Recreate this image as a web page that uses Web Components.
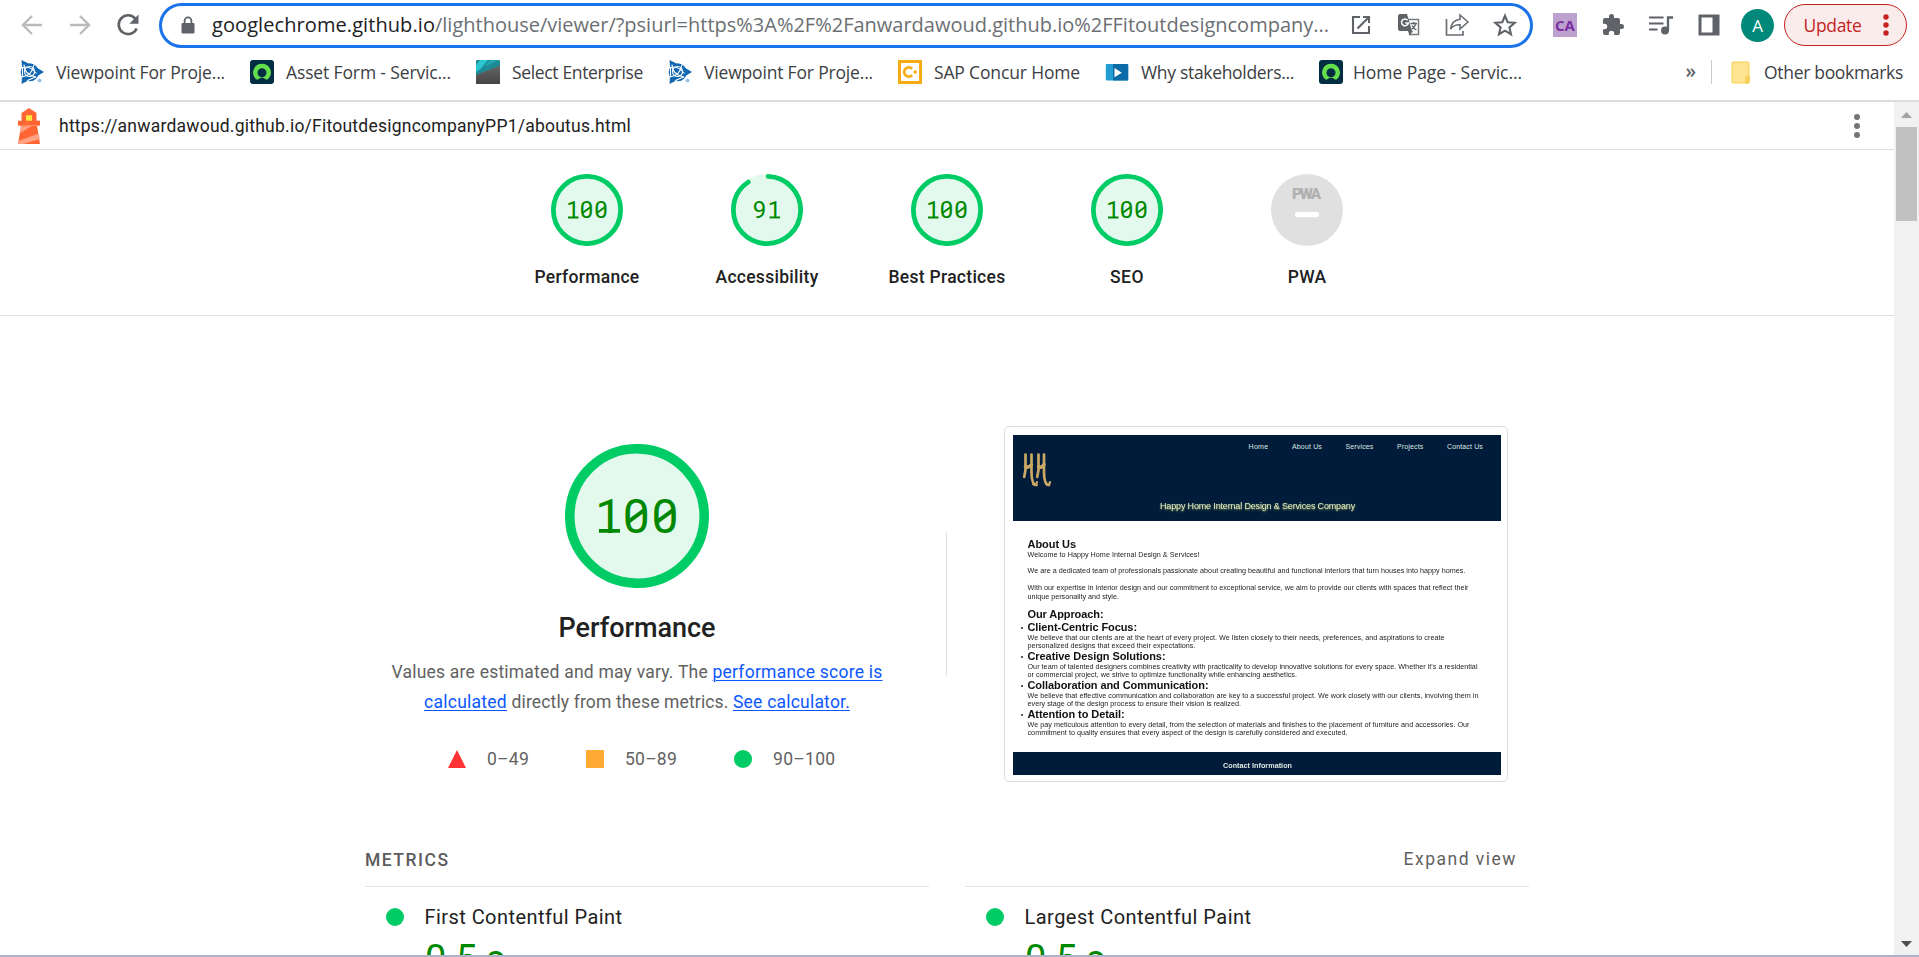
<!DOCTYPE html>
<html lang="en">
<head>
<meta charset="utf-8">
<title>Lighthouse Report Viewer</title>
<style>
html,body{margin:0;padding:0;height:957px;overflow:hidden;background:#fff}
body{font-family:Roboto,"Liberation Sans",sans-serif;color:#212121}
</style>
</head>
<body>
<app-window></app-window>
<script>
function define(name, html, init){
  const t=document.createElement('template');t.innerHTML=html;
  customElements.define(name,class extends HTMLElement{
    connectedCallback(){
      if(this.shadowRoot)return;
      this.attachShadow({mode:'open'}).appendChild(t.content.cloneNode(true));
      if(init)init.call(this,this.shadowRoot);
    }
  });
}

/* Text run that spreads its letters over a given width */
define('fit-text',`<style>:host{display:inline-block;white-space:pre;flex:none}</style><slot></slot>`,function(){
  const w=+this.getAttribute('w');
  const nat=this.getBoundingClientRect().width;
  const n=this.textContent.length;
  this.style.letterSpacing=((w-nat)/n).toFixed(4)+'px';
  this.style.width=w+'px';
});

const ICONS={
 back:[24,'<path d="M22 12H3.500M12 3 3 12l9 9" fill="none" stroke="#bababa" stroke-width="2.300"/>'],
 forward:[24,'<path d="M2 12h18.500M12 3l9 9-9 9" fill="none" stroke="#bababa" stroke-width="2.300"/>'],
 reload:[24,'<path d="M20.700 15.500A9.400 9.400 0 1 1 19.600 6" fill="none" stroke="#5f6368" stroke-width="2.600"/><path d="M22.500 1.500v9.200h-9.200z" fill="#5f6368"/>'],
 lock:[18,'<path d="M3 7.500h12v9.500h-12z" fill="#5f6368" stroke="#5f6368" stroke-width="1" stroke-linejoin="round"/><path d="M5.600 7.500V4.800a3.400 3.400 0 0 1 6.800 0v2.700" fill="none" stroke="#5f6368" stroke-width="1.800"/>'],
 open:[24,'<path d="M11 4H4v16h16v-7M14 4h6v6M20 4 8.500 15.500" fill="none" stroke="#5f6368" stroke-width="2.100"/>'],
 translate:[24,'<path d="M11 6.500h10.500v15H12" fill="#fff" stroke="#757a7f" stroke-width="1.500"/><path d="M1 3q0-2 2-2h7l5 17H3q-2 0-2-2z" fill="#5f6368"/><path d="M10.600 7.200A3.400 3.400 0 1 0 11.300 10H8.200" fill="none" stroke="#fff" stroke-width="1.500"/><path d="M13.500 10.500h6.500M16.700 9v1.500M19 10.500c-.8 2.800-2.300 4.500-4.300 6M15 12.500c1 2 2.500 3.500 4.500 4.500" fill="none" stroke="#5f6368" stroke-width="1.300"/><path d="m11 18 1.500 4.500L16 18z" fill="#5f6368"/>'],
 share:[24,'<path d="M1.500 6v16h16.500v-4" fill="none" stroke="#6b6f74" stroke-width="1.700"/><path d="M15 2l8 7-8 7v-4.300c-4.500-.2-7.500 1.300-9.500 4.300.8-5.500 4-9 9.500-9.700z" fill="none" stroke="#6b6f74" stroke-width="1.600"/>'],
 star:[24,'<path d="m12 2.800 2.700 6.400 7 .6-5.300 4.600 1.600 6.800-6-3.600-6 3.600 1.600-6.800L2.300 9.800l7-.6z" fill="none" stroke="#5f6368" stroke-width="2.100"/>'],
 puzzle:[24,'<path d="M20.500 11H19V7a2 2 0 0 0-2-2h-4V3.500a2.500 2.500 0 0 0-5 0V5H4a2 2 0 0 0-2 2v3.800h1.500a2.700 2.700 0 0 1 0 5.400H2V20a2 2 0 0 0 2 2h3.800v-1.500a2.700 2.700 0 0 1 5.400 0V22H17a2 2 0 0 0 2-2v-4h1.500a2.500 2.500 0 0 0 0-5z" fill="#5f6368"/>'],
 music:[24,'<path d="M0 4.500h14.500M0 10.500h14.500M0 16.500h8.500" fill="none" stroke="#5f6368" stroke-width="2.200"/><circle cx="16" cy="17.500" r="4" fill="#5f6368"/><path d="M19 17.500v-13h5" fill="none" stroke="#5f6368" stroke-width="2.300"/>'],
 panel:[24,'<path d="M1.500 1.500h21v21h-21z" fill="#5f6368"/><path d="M4.500 4.500h11v15h-11z" fill="#fff"/>'],
 trimble:[24,'<g fill="#1268b0"><circle cx="9.700" cy="12.300" r="9"/><path d="M1.500 0l7 3.500-6.500 4zM1.500 24l7-3.500-6.500-4.500zM16.500 7.500l7.500 4.500-7.500 4.500z"/></g><g fill="none" stroke="#fff" stroke-width="1.100"><path d="M1.500 8.500q7-4.500 15 5M4 4.500q0 10 12 12.500M2 17q10-1 12-12.500"/><circle cx="9.500" cy="11.500" r="5"/><path d="M2.500 7v10M7 20.800l9-4"/></g><circle cx="19.500" cy="20.500" r="1.600" fill="#a8c9e4" stroke="#6fa6d2" stroke-width=".6"/>'],
 servicenow:[24,'<rect width="24" height="24" rx="3" fill="#032d42"/><path d="M12 3.800A8.800 8.800 0 0 0 5.900 19c.7.700 1.700.700 2.500.2a6 6 0 0 1 7.200 0c.8.500 1.800.500 2.500-.2A8.800 8.800 0 0 0 12 3.800zm0 13.400a4.500 4.500 0 1 1 0-9 4.500 4.500 0 0 1 0 9z" fill="#63df4e"/>'],
 enterprise:[24,'<defs><linearGradient id="g" x2="0" y2="1"><stop stop-color="#707070"/><stop offset="1" stop-color="#454545"/></linearGradient></defs><path d="M0 2q0-2 2-2h20q2 0 2 2v22H0z" fill="url(#g)"/><path d="M0 2q0-2 2-2h20q2 0 2 2v3.500L0 15z" fill="#1d8a96"/><path d="M4 0h8L5 8.500 0 12V5z" fill="#2bc5d2"/><path d="M14 0h9L8 7z" fill="#23a5b0"/>'],
 concur:[24,'<path d="M1.500 1.500h21v21h-21z" fill="#fff" stroke="#f5ab12" stroke-width="3"/><path d="M14.200 8.700A4.700 4.700 0 1 0 14.200 15.300" fill="none" stroke="#f5ab12" stroke-width="2.700"/><circle cx="17.200" cy="12" r="1.800" fill="#f5ab12"/>'],
 video:[24,'<rect x=".8" y="4" width="22.400" height="16.400" rx="1" fill="#249dd4"/><path d="M8 4h14.200q1 0 1 1v14.400q0 1-1 1H8z" fill="#0c6ca8"/><path d="M9.500 8v9.300l7.300-4.600z" fill="#fff"/>'],
 folder:[24,'<path d="M3 2h15q1 0 1 1v19q0 1-1 1H3q-1 0-1-1V3q0-1 1-1z" fill="#ffe591" stroke="#f5cf4f" stroke-width="1"/><path d="M16 23v-5.500q0-1.500 1.500-1.500t1.500 1.500V22q0 1-1 1z" fill="#fbd863" stroke="#eebf34" stroke-width=".8"/>'],
 lighthouse:[36,'<path d="M18 0 25.500 5v8H10.500V5z" fill="#ff6633"/><path d="M7 12.700h22v5H7z" fill="#ff6633"/><path d="M10 17.700h16L29 36H7z" fill="#ff6633"/><path d="M15 7.200h6v5.500h-6z" fill="#ffeb3b"/><path d="M9.900 18.500 21 17.700 8.600 25.500z" fill="#ffa385"/><path d="M7.600 33 27.900 25.500l.8 5.500L12 36H7z" fill="#ffa385"/>'],
 kebab:[24,'<g fill="#757575"><circle cx="12" cy="3" r="3"/><circle cx="12" cy="12" r="3"/><circle cx="12" cy="21" r="3"/></g>']
};
define('ui-icon',`<style>:host{display:block;flex:none;line-height:0}svg{display:block;overflow:visible}</style><span></span>`,function(r){
  const [v,p]=ICONS[this.getAttribute('name')];
  const s=this.getAttribute('size')||24;
  r.querySelector('span').innerHTML=`<svg width="${s}" height="${s}" viewBox="0 0 ${v} ${v}">${p}</svg>`;
});

define('address-bar',`<style>
:host{box-sizing:border-box;display:flex;align-items:center;width:1374px;height:45px;border:3px solid #1a73e8;border-radius:23px;background:#fff;padding-left:17px;flex:none}
.u{margin-left:15px;font:20px/38px "Open Sans","Noto Sans",sans-serif;color:#202124;width:1117px;display:flex}
.u .p{color:#6b6f73}
.i{display:flex;margin-left:20px;gap:24px;align-items:center}
</style>
<ui-icon name="lock" size="18"></ui-icon>
<div class="u"><fit-text w="223">googlechrome.github.io</fit-text><fit-text class="p" w="894">/lighthouse/viewer/?psiurl=https%3A%2F%2Fanwardawoud.github.io%2FFitoutdesigncompany...</fit-text></div>
<div class="i"><ui-icon name="open"></ui-icon><ui-icon name="translate"></ui-icon><ui-icon name="share"></ui-icon><ui-icon name="star"></ui-icon></div>`);

define('update-chip',`<style>:host{box-sizing:border-box;display:flex;align-items:center;justify-content:space-between;width:123px;height:42px;border:1.500px solid #c5221f;border-radius:21px;background:#faeceb;color:#c5221f;padding:0 17px 0 18.500px;font:17.500px/40px "Open Sans","Noto Sans",sans-serif}
svg{display:block}</style><fit-text w="58">Update</fit-text><svg width="6" height="24" fill="#c5221f"><circle cx="3" cy="4" r="2.700"/><circle cx="3" cy="12" r="2.700"/><circle cx="3" cy="20" r="2.700"/></svg>`);

define('browser-toolbar',`<style>
:host{display:flex;height:50px;align-items:center;padding:0 12px 0 20px;box-sizing:border-box}
.n{display:flex;gap:24px;width:139px}
.x{display:flex;align-items:center;gap:24px;margin-left:20px;flex:1}
.ca{width:24px;height:24px;background:#bda2cf;color:#7b2fa0;font:bold 15px/25px "Open Sans",sans-serif;text-align:center}
.av{width:33px;height:33px;border-radius:50%;background:#00897b;color:#fff;font:17px/33px "Open Sans",sans-serif;text-align:center;margin-left:-4px}
update-chip{margin-left:-14px}
</style>
<div class="n"><ui-icon name="back"></ui-icon><ui-icon name="forward"></ui-icon><ui-icon name="reload"></ui-icon></div>
<address-bar></address-bar>
<div class="x"><div class="ca">CA</div><ui-icon name="puzzle"></ui-icon><ui-icon name="music"></ui-icon><ui-icon name="panel"></ui-icon><div class="av">A</div><update-chip></update-chip></div>`);

define('bookmark-item',`<style>:host{display:flex;align-items:center;gap:12px;flex:none;font:17.500px/24px "Open Sans","Noto Sans",sans-serif;color:#3c4043}</style><slot></slot>`,function(r){
  const n=document.createElement('ui-icon');n.setAttribute('name',this.getAttribute('icon'));r.insertBefore(n,r.querySelector('slot'));
});
define('bookmarks-bar',`<style>
:host{box-sizing:border-box;display:flex;align-items:center;height:52px;padding:0 16px 6px 20px;border-bottom:2px solid #dadcdf}
.l{display:flex;gap:25px;flex:1}
.m{font:600 19px/20px "Open Sans",sans-serif;color:#5f6368;margin-right:15px;padding-bottom:3px}
.s{width:1px;height:24px;background:#c8cacd;margin-right:18px}
bookmark-item:last-child{gap:10px}
</style>
<div class="l">
<bookmark-item icon="trimble"><fit-text w="169">Viewpoint For Proje...</fit-text></bookmark-item>
<bookmark-item icon="servicenow"><fit-text w="165">Asset Form - Servic...</fit-text></bookmark-item>
<bookmark-item icon="enterprise"><fit-text w="131">Select Enterprise</fit-text></bookmark-item>
<bookmark-item icon="trimble"><fit-text w="169">Viewpoint For Proje...</fit-text></bookmark-item>
<bookmark-item icon="concur"><fit-text w="146">SAP Concur Home</fit-text></bookmark-item>
<bookmark-item icon="video"><fit-text w="153">Why stakeholders...</fit-text></bookmark-item>
<bookmark-item icon="servicenow"><fit-text w="169">Home Page - Servic...</fit-text></bookmark-item>
</div><div class="m">»</div><div class="s"></div>
<bookmark-item icon="folder"><fit-text w="139">Other bookmarks</fit-text></bookmark-item>`);

define('viewer-header',`<style>:host{box-sizing:border-box;display:flex;align-items:center;height:48px;border-bottom:1px solid #dedede;padding:0 25px 0 11px;color:#212121;font:17.500px/46px Roboto,sans-serif}
.u{margin-left:12px;flex:1}</style>
<ui-icon name="lighthouse" size="36"></ui-icon><div class="u"><fit-text w="572">https://anwardawoud.github.io/FitoutdesigncompanyPP1/aboutus.html</fit-text></div><ui-icon name="kebab"></ui-icon>`);

/* Score ring; digits sit in monospace cells, with a slashed zero and a footed one */
define('score-dial',`<style>:host{display:block}
svg{display:block}
text{font-family:Roboto,sans-serif;font-size:40px;font-weight:400;fill:#080}</style><svg viewBox="0 0 120 120"><circle cx="60" cy="60" r="60" fill="#e4f9ee"/><circle class="a" cx="60" cy="60" r="56" fill="none" stroke="#0c6" stroke-width="8" stroke-linecap="round" transform="rotate(-88 60 60)"/><text y="74"></text><path class="m" fill="none" stroke="#080" stroke-width="3.200"/></svg>`,function(r){
  const s=+this.getAttribute('size'),v=this.getAttribute('score');
  const svg=r.querySelector('svg');svg.setAttribute('width',s);svg.setAttribute('height',s);
  this.style.width=s+'px';
  if(v<100)r.querySelector('.a').setAttribute('stroke-dasharray',(v/100*351.86-4)+' 351.86');
  const t=r.querySelector('text');t.textContent=v;
  const x0=59.300-v.length*12;let xs=[],d='';
  [...v].forEach((c,i)=>{const x=x0+i*24;
    xs.push(x+(c==='1'?2:.8));
    if(c==='1')d+=`M${x+5} 72.400h17.500`;
    if(c==='0')d+=`M${x+4.500} 65.500l15-11`;
  });
  t.setAttribute('x',xs.join(' '));
  r.querySelector('.m').setAttribute('d',d);
});
define('pwa-badge',`<style>:host{display:block}svg{display:block}</style><svg width="72" height="72"><circle cx="36" cy="36" r="36" fill="#e0e0e0"/><text x="21" y="25" font-family="Roboto,sans-serif" font-weight="900" font-size="15.200" textLength="29" fill="#b0b0b0">PWA</text><rect x="24" y="38" width="24" height="5.200" rx="2.600" fill="#fff"/></svg>`);
define('category-score',`<style>:host{display:flex;flex-direction:column;align-items:center;width:180px;font:500 17.500px/24px Roboto,sans-serif;color:#212121}.l{margin-top:19px}</style><slot name="dial"></slot><div class="l"><slot></slot></div>`);
define('score-row',`<style>:host{box-sizing:border-box;display:flex;justify-content:center;height:166px;padding-top:24px;border-bottom:1px solid #e0e0e0}</style>
<category-score><score-dial slot="dial" size="72" score="100"></score-dial><fit-text w="105">Performance</fit-text></category-score>
<category-score><score-dial slot="dial" size="72" score="91"></score-dial><fit-text w="103">Accessibility</fit-text></category-score>
<category-score><score-dial slot="dial" size="72" score="100"></score-dial><fit-text w="117">Best Practices</fit-text></category-score>
<category-score><score-dial slot="dial" size="72" score="100"></score-dial><fit-text w="34">SEO</fit-text></category-score>
<category-score><pwa-badge slot="dial"></pwa-badge><fit-text w="38.500">PWA</fit-text></category-score>`);

define('score-legend',`<style>:host{display:flex;font:17.500px/24px Roboto,sans-serif;color:#616161}
div{display:flex;align-items:center}svg{margin-right:21px}.b{margin-left:57px}</style>
<div><svg width="18" height="18"><path d="M9 0l9 18H0z" fill="#f33"/></svg><fit-text w="42">0–49</fit-text></div>
<div class="b"><svg width="18" height="18"><path d="M0 0h18v18H0z" fill="#fa3"/></svg><fit-text w="52">50–89</fit-text></div>
<div class="b"><svg width="18" height="18"><circle cx="9" cy="9" r="9" fill="#0c6"/></svg><fit-text w="62.500">90–100</fit-text></div>`);
define('performance-summary',`<style>
:host{display:block;width:546px}
.c{display:flex;flex-direction:column;align-items:center}
.t{font:500 27px/36px Roboto,sans-serif;color:#212121;margin-top:22px}
.d{font:17.500px/30px Roboto,sans-serif;color:#616161;margin-top:11px;display:flex;flex-direction:column;align-items:center}
.d>div{display:flex}
.a{color:#0b57ff;text-decoration:underline;text-decoration-thickness:1px;text-underline-offset:2px}
score-legend{margin:30px 0 0 84px}
</style>
<div class="c"><score-dial size="144" score="100"></score-dial><div class="t"><fit-text w="157">Performance</fit-text></div>
<div class="d"><div><fit-text w="321">Values are estimated and may vary. The </fit-text><fit-text class="a" w="170">performance score is</fit-text></div>
<div><fit-text class="a" w="83">calculated</fit-text><fit-text w="226"> directly from these metrics. </fit-text><fit-text class="a" w="117">See calculator.</fit-text></div></div></div>
<score-legend></score-legend>`);

define('site-preview',`<style>
:host{box-sizing:border-box;display:block;width:504px;height:356px;border:1.500px solid #dcdcdc;border-radius:5px;padding:8px 8px;font:7.200px/8.400px "Liberation Sans",Arial,sans-serif;color:#222}
.pg{filter:blur(.3px);width:488px}
header{height:86px;background:#001c3a;color:#dfe8e2}
nav{display:flex;justify-content:flex-end;gap:23.500px;padding:7px 18px 0 0;font-size:7px;line-height:9px}
.r{display:flex;padding-left:9px}
h1{font:9px/12px "Liberation Sans",Arial,sans-serif;margin:12px 0 0 147px;color:#e6efcb;text-shadow:0 1px 2px #8a9a4a}
main{height:231px;box-sizing:border-box;padding:16.500px 0 0 14.500px;display:flex;flex-direction:column;align-items:flex-start}
main>fit-text{transform:translateY(.7px)}
b{font:bold 11px/12.200px "Liberation Sans",Arial,sans-serif;color:#111;display:flex;align-items:center}
b.k{margin-left:-7px}
b.k::before{content:"";width:2.200px;height:2.200px;border-radius:50%;background:#222;margin:3px 4.800px 0 0}
.g{margin-top:8.350px}
footer{height:23px;background:#001c3a;color:#dfe8e2;padding-left:210px;font:bold 7.200px/27px "Liberation Sans",Arial,sans-serif}
</style>
<div class="pg"><header>
<nav><fit-text w="20">Home</fit-text><fit-text w="30">About Us</fit-text><fit-text w="28">Services</fit-text><fit-text w="26.500">Projects</fit-text><fit-text w="36">Contact Us</fit-text></nav>
<div class="r"><svg width="30" height="37" viewBox="0 0 30 37" fill="none" stroke="#c9a866" stroke-linecap="round"><path d="M3.500 3.500V19L2.200 26M9.500 3.500v18q0 12 5 12.500M16.500 3.500V19l-1.300 7M22 3.500v18q0 12 5 12.500" stroke-width="2.700"/><path d="M3.500 15.500q3 2 6-2M16.500 15.500q3 2 5.500-2" stroke-width="3.500"/><path d="M11 33q3 3 4-2M24 33q3 3 4-2" stroke-width="2.200"/></svg></div>
<h1><fit-text w="195">Happy Home Internal Design &amp; Services Company</fit-text></h1></header>
<main>
<b><fit-text w="48.500">About Us</fit-text></b>
<fit-text w="172">Welcome to Happy Home Internal Design &amp; Services!</fit-text>
<fit-text class="g" w="438">We are a dedicated team of professionals passionate about creating beautiful and functional interiors that turn houses into happy homes.</fit-text>
<fit-text class="g" w="441">With our expertise in interior design and our commitment to exceptional service, we aim to provide our clients with spaces that reflect their</fit-text>
<fit-text w="91.500">unique personality and style.</fit-text>
<b class="g"><fit-text w="76">Our Approach:</fit-text></b>
<b class="k"><fit-text w="109.500">Client-Centric Focus:</fit-text></b>
<fit-text w="417">We believe that our clients are at the heart of every project. We listen closely to their needs, preferences, and aspirations to create</fit-text>
<fit-text w="168">personalized designs that exceed their expectations.</fit-text>
<b class="k"><fit-text w="138">Creative Design Solutions:</fit-text></b>
<fit-text w="450">Our team of talented designers combines creativity with practicality to develop innovative solutions for every space. Whether it's a residential</fit-text>
<fit-text w="269.500">or commercial project, we strive to optimize functionality while enhancing aesthetics.</fit-text>
<b class="k"><fit-text w="181">Collaboration and Communication:</fit-text></b>
<fit-text w="451">We believe that effective communication and collaboration are key to a successful project. We work closely with our clients, involving them in</fit-text>
<fit-text w="213.500">every stage of the design process to ensure their vision is realized.</fit-text>
<b class="k"><fit-text w="97">Attention to Detail:</fit-text></b>
<fit-text w="442">We pay meticulous attention to every detail, from the selection of materials and finishes to the placement of furniture and accessories. Our</fit-text>
<fit-text w="320">commitment to quality ensures that every aspect of the design is carefully considered and executed.</fit-text>
</main>
<footer><fit-text w="69">Contact Information</fit-text></footer></div>`);

define('metric-card',`<style>:host{display:block;width:564px;border-top:1px solid #e4e4e4}
.r{display:flex;align-items:center;padding:15px 0 0 21px;font:20px/30px Roboto,sans-serif;color:#212121}
i{width:18px;height:18px;border-radius:50%;background:#0c6;margin-right:20.500px}
.v{font:38px/46px Roboto,sans-serif;color:#080;padding:4px 0 0 60px}</style><div class="r"><i></i><slot></slot></div><div class="v"><fit-text w="80">0.5 s</fit-text></div>`);
define('metrics-section',`<style>:host{display:block;width:1164px}
.h{display:flex;justify-content:space-between;height:43px;font:17.500px/34px Roboto,sans-serif;color:#616161}
.h fit-text:first-child{font-weight:500;color:#5c5c5c}.h .e{margin:-1px 12px 0 0}
.g{display:flex;gap:36px}</style>
<div class="h"><fit-text w="84.500">METRICS</fit-text><fit-text class="e" w="113.500">Expand view</fit-text></div>
<div class="g"><metric-card><fit-text w="198">First Contentful Paint</fit-text></metric-card><metric-card><fit-text w="227">Largest Contentful Paint</fit-text></metric-card></div>`);

define('report-view',`<style>:host{display:block;width:1894px;height:853px;overflow:hidden;background:#fff}
.s{display:flex;height:357px;margin:110px 0 60px 364px}
performance-summary{margin-top:18px}
.d{width:1px;height:144px;background:#e0e0e0;margin:106px 57px 0 36px}
metrics-section{margin-left:365px}</style>
<viewer-header></viewer-header><score-row></score-row>
<div class="s"><performance-summary></performance-summary><div class="d"></div><site-preview></site-preview></div>
<metrics-section></metrics-section>`);
define('scroll-bar',`<style>:host{display:flex;flex-direction:column;align-items:center;width:25px;height:853px;background:#f1f1f1}
svg{display:block}.t{width:21px;height:94px;background:#c1c1c1}.f{flex:1}</style>
<svg width="25" height="25"><path d="M7 16l5.500-6 5.500 6z" fill="#a3a3a3"/></svg><div class="t"></div><div class="f"></div><svg width="25" height="22"><path d="M7 8l5.500 6L18 8z" fill="#505050"/></svg>`);
define('app-window',`<style>:host{display:block;width:1919px;height:957px;overflow:hidden;background:#fff}
.v{display:flex}.b{height:2px;background:#b1b2c6}</style>
<browser-toolbar></browser-toolbar><bookmarks-bar></bookmarks-bar><div class="v"><report-view></report-view><scroll-bar></scroll-bar></div><div class="b"></div>`);
</script>
</body>
</html>
